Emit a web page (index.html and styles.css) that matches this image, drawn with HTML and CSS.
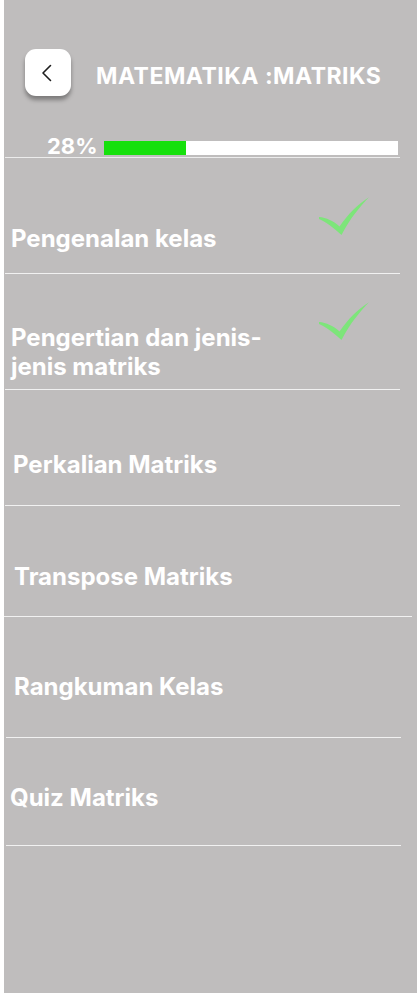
FILE: index.html
```html
<!DOCTYPE html>
<html lang="id">
<head>
<meta charset="utf-8">
<title>Matematika : Matriks</title>
<link rel="stylesheet" href="styles.css">
</head>
<body>
<div class="screen">
  <header class="header">
    <button class="back" aria-label="Kembali">
      <svg width="12" height="18" viewBox="0 0 12 18"><path d="M9.5 1.5 L2 9 L9.5 16.5" fill="none" stroke="#1e1e1e" stroke-width="1.6" stroke-linecap="round" stroke-linejoin="round"/></svg>
    </button>
    <h1 class="title">MATEMATIKA :MATRIKS</h1>
  </header>

  <div class="progress">
    <span class="progress__pct">28%</span>
    <div class="progress__bar"><div class="progress__fill" style="width:28%"></div></div>
  </div>

  <ul class="lessons">
    <li class="lesson lesson--1">
      <span class="lesson__name">Pengenalan kelas</span>
      <svg class="check" width="52" height="40" viewBox="0 0 52 40"><path d="M1 21 C8 21.5 16 25 21.5 30.5 C30 18 40 8 51 1.2 C43 9.5 32 22 23.5 39 C16 32 8 26 1 23 Z" fill="#7de57a"/></svg>
    </li>
    <li class="lesson lesson--2">
      <span class="lesson__name">Pengertian dan jenis-<br>jenis matriks</span>
      <svg class="check" width="52" height="40" viewBox="0 0 52 40"><path d="M1 21 C8 21.5 16 25 21.5 30.5 C30 18 40 8 51 1.2 C43 9.5 32 22 23.5 39 C16 32 8 26 1 23 Z" fill="#7de57a"/></svg>
    </li>
    <li class="lesson lesson--3"><span class="lesson__name">Perkalian Matriks</span></li>
    <li class="lesson lesson--4"><span class="lesson__name">Transpose Matriks</span></li>
    <li class="lesson lesson--5"><span class="lesson__name">Rangkuman Kelas</span></li>
    <li class="lesson lesson--6"><span class="lesson__name">Quiz Matriks</span></li>
  </ul>
</div>
</body>
</html>
```

FILE: styles.css
```css
* { box-sizing: border-box; }

html, body {
  margin: 0;
  padding: 0;
  background: #ffffff;
}

body {
  width: 417px;
  height: 994px;
  overflow: hidden;
  font-family: Inter, "Noto Sans", "Liberation Sans", sans-serif;
  color: #ffffff;
}

.screen {
  margin-left: 4px;
  width: 413px;
  height: 993px;
  background: #bfbdbd;
  display: flex;
  flex-direction: column;
}

.header {
  display: flex;
  align-items: center;
  padding: 49px 0 0 21px;
  gap: 25px;
}

.back {
  width: 46px;
  height: 47px;
  border: none;
  border-radius: 11px;
  background: #ffffff;
  box-shadow: 0 4px 4px rgba(0, 0, 0, 0.35);
  display: flex;
  align-items: center;
  justify-content: center;
  padding: 0 2px 0 0;
}

.title {
  margin: 0;
  padding-top: 7px;
  font-size: 23px;
  font-weight: 700;
  line-height: 28px;
  letter-spacing: 0.5px;
  white-space: nowrap;
}

.progress {
  margin: 42px 0 0 1px;
  width: 395px;
  padding: 0 0 2px 42px;
  display: flex;
  align-items: flex-end;
  gap: 6px;
  border-bottom: 1px solid #ececec;
}

.progress__pct {
  font-size: 22px;
  font-weight: 700;
  line-height: 17px;
}

.progress__bar {
  width: 294px;
  height: 14px;
  background: #ffffff;
}

.progress__fill {
  height: 100%;
  background: #16e00c;
}

.lessons {
  list-style: none;
  margin: 0;
  padding: 0;
}

.lesson {
  margin-left: 1px;
  width: 395px;
  display: flex;
  align-items: flex-start;
  border-bottom: 1px solid #f1f1f1;
  font-size: 24px;
  font-weight: 700;
  line-height: 29px;
}

.lesson__name { display: block; white-space: nowrap; }

.check { flex: none; margin-left: auto; margin-right: 30px; }

.lesson--1 { height: 116px; padding: 66px 0 0 6px; }
.lesson--1 .check { margin-top: -28px; }
.lesson--2 { height: 116px; padding: 49px 0 0 6px; }
.lesson--2 .check { margin-top: -22px; }
.lesson--3 { height: 116px; padding: 60px 0 0 8px; }
.lesson--4 { height: 111px; padding: 56px 0 0 10px; width: 408px; margin-left: 0; }
.lesson--5 { height: 121px; padding: 55px 0 0 8px; margin-left: 2px; }
.lesson--6 { height: 108px; padding: 45px 0 0 4px; margin-left: 2px; }
```
